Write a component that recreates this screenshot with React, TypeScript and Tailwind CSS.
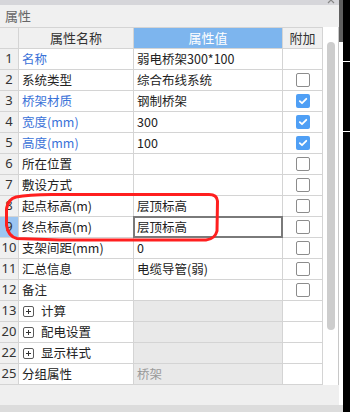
import React from "react";

type Row = {
  n: string;
  name: string;
  value?: string;
  blue?: boolean;
  cb?: "none" | "off" | "on";
  group?: boolean;
  grayVal?: boolean;
  valGrayText?: boolean;
  editing?: boolean;
  selected?: boolean;
};

const rows: Row[] = [
  { n: "1", name: "名称", value: "弱电桥架300*100", blue: true, cb: "none" },
  { n: "2", name: "系统类型", value: "综合布线系统", cb: "off" },
  { n: "3", name: "桥架材质", value: "钢制桥架", blue: true, cb: "on" },
  { n: "4", name: "宽度(mm)", value: "300", blue: true, cb: "on" },
  { n: "5", name: "高度(mm)", value: "100", blue: true, cb: "on" },
  { n: "6", name: "所在位置", value: "", cb: "off" },
  { n: "7", name: "敷设方式", value: "", cb: "off" },
  { n: "8", name: "起点标高(m)", value: "层顶标高", cb: "off" },
  { n: "9", name: "终点标高(m)", value: "层顶标高", cb: "off", editing: true, selected: true },
  { n: "10", name: "支架间距(mm)", value: "0", cb: "off" },
  { n: "11", name: "汇总信息", value: "电缆导管(弱)", cb: "off" },
  { n: "12", name: "备注", value: "", cb: "off" },
  { n: "13", name: "计算", group: true, grayVal: true, cb: "none" },
  { n: "20", name: "配电设置", group: true, grayVal: true, cb: "none" },
  { n: "22", name: "显示样式", group: true, grayVal: true, cb: "none" },
  { n: "25", name: "分组属性", value: "桥架", grayVal: true, valGrayText: true, cb: "none" },
];

const font = { fontFamily: '"Noto Sans CJK SC", "Noto Sans", sans-serif' };

function Checkbox({ on }: { on: boolean }) {
  if (on) {
    return (
      <div className="w-[14px] h-[14px] rounded-[2px] bg-[#4f9ff5] flex items-center justify-center">
        <svg width="10" height="10" viewBox="0 0 10 10">
          <path d="M1.8 5.2 L4 7.2 L8.3 2.8" stroke="white" strokeWidth="1.8" fill="none" strokeLinecap="round" strokeLinejoin="round" />
        </svg>
      </div>
    );
  }
  return <div className="w-[14px] h-[14px] rounded-[2px] border border-[#8c8c8c] bg-white" />;
}

function PlusBox() {
  return (
    <svg width="11" height="11" viewBox="0 0 11 11" className="shrink-0">
      <rect x="0.5" y="0.5" width="10" height="10" rx="1.5" fill="white" stroke="#5a5a5a" />
      <path d="M3 5.5 H8 M5.5 3 V8" stroke="#333" strokeWidth="1" />
    </svg>
  );
}

export default function App() {
  const line = "border-[#d4d4d4]";
  return (
    <div className="w-[350px] h-[412px] bg-black flex relative overflow-hidden text-[12px]" style={font}>
      <div className="w-[343px] h-full flex flex-col">
        <div className="flex flex-1">
          {/* main panel */}
          <div className="w-[339px] flex flex-col">
            <div className="h-[5px] bg-[#d6d6da] relative">
              <svg className="absolute left-[327px] top-0" width="8" height="4" viewBox="0 0 8 4">
                <path d="M1 -3 L7 3 M7 -3 L1 3" stroke="#888" strokeWidth="1.2" />
              </svg>
            </div>
            <div className="h-[22px] bg-[#f0f0f0] flex items-center pl-[5px] text-[13px] text-[#666]">属性</div>
            <div className="flex">
              <div className="w-[323px] flex flex-col">
                {/* header */}
                <div className="flex h-[22px]">
                  <div className={`w-[19px] border-t border-b border-r ${line} bg-[#f0f0f0]`} />
                  <div className={`w-[115px] border-t border-b border-r ${line} bg-[#f0f0f0] flex items-center justify-center text-[13px] text-[#333]`}>属性名称</div>
                  <div className={`w-[149px] border-t border-b border-r ${line} bg-[#7db5ee] flex items-center justify-center text-[13px] text-white`}>属性值</div>
                  <div className={`w-[40px] border-t border-b border-r ${line} bg-[#f0f0f0] flex items-center justify-center text-[13px] text-[#333]`}>附加</div>
                </div>
                {rows.map((r) => (
                  <div key={r.n} className="flex h-[21px]">
                    <div
                      className={`w-[19px] border-b border-r ${line} ${r.selected ? "bg-[#9cc5f1]" : "bg-[#f0f0f0]"} flex items-center justify-center text-[13px] text-[#333]`}
                      style={{ fontFamily: '"Noto Sans", sans-serif' }}
                    >
                      {r.n}
                    </div>
                    <div
                      className={`w-[115px] border-b border-r ${line} bg-white flex items-center ${r.group ? "pl-[4px] gap-[7px]" : "pl-[3px]"} ${r.blue ? "text-[#3a72d8]" : "text-[#222]"} text-[12.5px] whitespace-nowrap overflow-hidden`}
                    >
                      {r.group && <PlusBox />}
                      <span>{r.name}</span>
                    </div>
                    <div className={`w-[149px] border-b border-r ${line} ${r.grayVal ? "bg-[#e9e9e9]" : "bg-white"} relative flex items-center pl-[3px] text-[12.5px] ${r.valGrayText ? "text-[#9a9a9a]" : "text-[#222]"} whitespace-nowrap`}>
                      {r.editing && (
                        <div className="absolute left-[-1px] top-[-1px] right-[-1px] bottom-[-1px] border-2 border-[#7a7a7a]" />
                      )}
                      <span className="relative">{r.value}</span>
                    </div>
                    <div className={`w-[40px] border-b border-r ${line} bg-white flex items-center justify-center`}>
                      {r.cb === "on" && <Checkbox on />}
                      {r.cb === "off" && <Checkbox on={false} />}
                    </div>
                  </div>
                ))}
              </div>
              {/* scroll column */}
              <div className="w-[16px] bg-white border-r border-[#c8c8c8] pt-[15px] pl-[4px]">
                <div className="w-[8px] h-[288px] rounded-full bg-[#cdcdcd]" />
              </div>
            </div>
            <div className="flex-1 bg-[#efefef]" />
          </div>
          {/* right strip */}
          <div className="w-[4px] flex flex-col">
            <div className="h-[42px] bg-[#5f5f5f]" />
            <div className="flex-1 bg-white" />
          </div>
        </div>
        <div className="h-[7px] bg-[#dcdcdc]" />
      </div>
      {/* background window edges */}
      <div className="flex-1 flex flex-col">
        <div className="h-[61px]" />
        <div className="h-[1px] bg-white" />
        <div className="h-[69px]" />
        <div className="h-[1px] bg-white" />
      </div>

      {/* red annotation */}
      <svg className="absolute left-0 top-0 pointer-events-none" width="350" height="412" viewBox="0 0 350 412">
        <path
          d="M16 197 Q8 199 6.5 209 L6.5 225 Q8 236.5 17 238.5 L60 240 L206 240 Q215 239 217 231 L217.5 201 Q217 194.5 209 194.5 L60 194.5 Q30 194 16 197 Z"
          fill="none"
          stroke="#ff1f1f"
          strokeWidth="3"
          strokeLinejoin="round"
        />
      </svg>
    </div>
  );
}
